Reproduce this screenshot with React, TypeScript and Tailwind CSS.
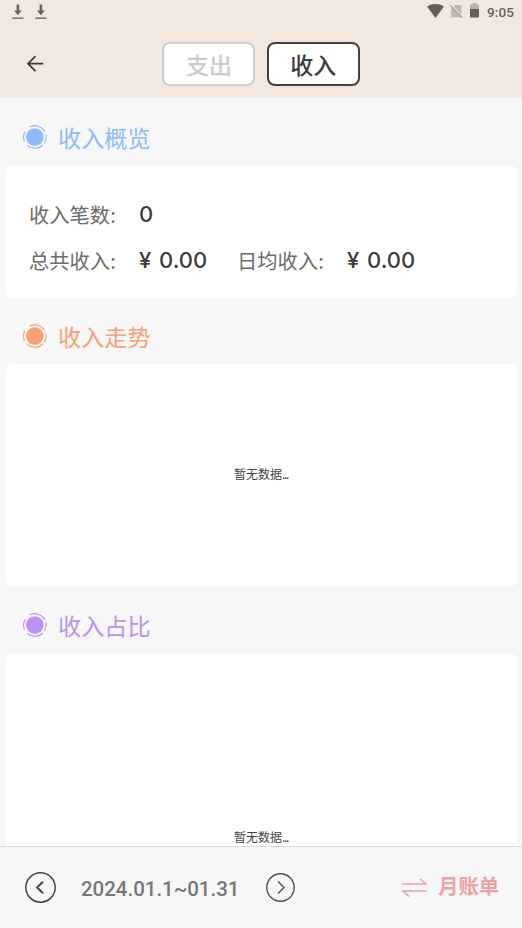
import React from "react";

const DownloadIcon = () => (
  <svg width="12" height="16" viewBox="0 0 12 16">
    <path d="M4.600.4h2.600v6.200h2.600L5.900 11.200 2 6.600h2.600z" fill="#686461" />
    <path d="M.3 14.200h11.200" stroke="#86807b" strokeWidth="1.700" />
  </svg>
);

function StatusBar() {
  return (
    <div className="flex h-6 items-start justify-between pl-[12px] pr-[8px]">
      <div className="flex gap-[11px] pt-1">
        <DownloadIcon />
        <DownloadIcon />
      </div>
      <div className="flex items-start">
        <svg className="mt-[4px]" width="17" height="14" viewBox="0 0 17 14">
          <path d="M0 2.600C2.400.8 5.300 0 8.500 0s6.100.8 8.500 2.600L8.500 14z" fill="#625e5b" />
        </svg>
        <svg className="ml-[6px] mt-[4px]" width="13" height="14" viewBox="0 0 13 14">
          <path d="M5 1h6.500v12.200H1.200V4.800z" fill="#bfb7b0" />
          <path d="M1 .6 13.400 13.200" stroke="#f2e8df" strokeWidth="1.200" />
          <path d="M0 1.200 12 13.500" stroke="#a8a09a" strokeWidth="1.200" />
        </svg>
        <svg className="ml-[7px] mt-[3px]" width="9" height="15" viewBox="0 0 9 15">
          <path d="M0 1.500h2.500V0h4v1.500H9V6H0z" fill="#bbb3ac" />
          <path d="M0 6h9v8.500H0z" fill="#625e5b" />
        </svg>
        <span className="ml-[8px] mt-[4px] text-[13.5px] font-medium leading-4 tracking-[0.1px] text-[#65615e] [font-family:Roboto,sans-serif]">
          9:05
        </span>
      </div>
    </div>
  );
}

function Header() {
  return (
    <header className="h-[98px] shrink-0 bg-[#f2e8df]">
      <StatusBar />
      <div className="flex pt-[18px]">
        <button className="ml-[26px] mt-[13px] h-[18px] w-[18px]" aria-label="返回">
          <svg width="18" height="18" viewBox="0 0 18 18" fill="none" stroke="#3b3937" strokeWidth="1.700">
            <path d="M17.200 8.700H2M9.500 1.200 2 8.700l7.500 7.500" />
          </svg>
        </button>
        <div className="ml-[118.4px] flex gap-[11.4px]">
          <button className="h-[44px] w-[93px] rounded-[8px] border-2 border-[#cccccc] bg-white text-[23px] font-medium leading-[40px] text-[#cbcbcb]">
            支出
          </button>
          <button className="h-[44px] w-[93px] rounded-[8px] border-2 border-[#414141] bg-white text-[23px] font-medium leading-[40px] text-[#3d3d3d]">
            收入
          </button>
        </div>
      </div>
    </header>
  );
}

function SectionTitle({ color, height, children }: { color: string; height: string; children: string }) {
  return (
    <h2 className={`flex shrink-0 items-center pl-[23px] ${height} ${color}`}>
      <svg width="24" height="24" viewBox="0 0 24 24" fill="none" stroke="currentColor">
        <circle cx="11.800" cy="12" r="8.800" fill="currentColor" stroke="none" />
        <path
          strokeWidth="1.100"
          d="M6.700 1.900A11.300 11.300 0 0 1 21.900 6.700M22.800 9.400A11.300 11.300 0 0 1 21.400 17.900M19.800 20A11.300 11.300 0 0 1 4.200 20.300M1.500 16.500A11.300 11.300 0 0 1 2.100 6.400"
        />
      </svg>
      <span className="ml-[11px] text-[23.2px] leading-[34px]">{children}</span>
    </h2>
  );
}

function Label({ children }: { children: string }) {
  return <span className="w-[110px] text-[20.3px] leading-[30px] text-[#6c6c6c]">{children}</span>;
}

function Value({ children }: { children: string }) {
  return (
    <span className="text-[22px] font-medium leading-[30px] text-[#3e3e3e] [font-family:Inter,sans-serif] [word-spacing:2px]">
      {children}
    </span>
  );
}

const Empty = () => (
  <span className="pr-[1px] text-[12px] leading-[18px] text-[#444444]">
    暂无数据<span className="tracking-[-1.4px]">...</span>
  </span>
);

function Footer() {
  return (
    <footer className="flex h-[82px] shrink-0 items-center border-t border-[#d9d9d9] bg-[#f7f7f7] pl-[25px] pr-[23px]">
      <svg width="31" height="31" viewBox="0 0 31 31" fill="none" stroke="#454545">
        <circle cx="15.500" cy="15.500" r="14.700" strokeWidth="1.500" />
        <path d="m18 9.700-6 5.800 6 5.800" strokeWidth="2" />
      </svg>
      <span className="ml-[25px] mt-[3px] w-[160px] whitespace-nowrap text-[20.5px] font-medium leading-6 tracking-[-0.03px] text-[#777777] [font-family:Roboto,sans-serif]">
        2024.01.1~01.31
      </span>
      <svg className="ml-[25px]" width="29" height="29" viewBox="0 0 29 29" fill="none" stroke="#505050">
        <circle cx="14.500" cy="14.500" r="13.700" strokeWidth="1.400" />
        <path d="m12 8.500 6 6-6 6" strokeWidth="1.400" />
      </svg>
      <svg className="ml-auto" width="25" height="20" viewBox="0 0 25 20" fill="none" stroke="#eda2a2" strokeWidth="1.500">
        <path d="M0 6h24L18 .8M25 13H1l6 5.500" />
      </svg>
      <span className="mb-[6px] ml-[11px] text-[20.3px] font-bold leading-[30px] text-[#eda2a2]">月账单</span>
    </footer>
  );
}

export default function App() {
  return (
    <div className="flex h-[928px] w-[522px] flex-col overflow-hidden bg-[#f7f7f7] [font-family:'Noto_Sans_CJK_SC',sans-serif]">
      <Header />
      <main className="flex min-h-0 flex-1 flex-col overflow-hidden pl-[6px] pr-[5px]">
        <div className="-ml-[6px] shrink-0 pt-[10px]">
          <SectionTitle color="text-[#8fbafc]" height="h-[57px]">收入概览</SectionTitle>
        </div>
        <section className="h-[133px] shrink-0 rounded-[8px] bg-white pl-[23px] pt-[34px]">
          <div className="flex h-[45.5px] items-start">
            <Label>收入笔数:</Label>
            <Value>0</Value>
          </div>
          <div className="flex items-start">
            <div className="flex w-[208px]">
              <Label>总共收入:</Label>
              <Value>¥ 0.00</Value>
            </div>
            <Label>日均收入:</Label>
            <Value>¥ 0.00</Value>
          </div>
        </section>
        <div className="-ml-[6px] shrink-0 pt-[10px]">
          <SectionTitle color="text-[#fba076]" height="h-[56px]">收入走势</SectionTitle>
        </div>
        <section className="flex h-[223px] shrink-0 items-center justify-center rounded-[8px] bg-white pb-[4px]">
          <Empty />
        </section>
        <div className="-ml-[6px] shrink-0 pt-[10px]">
          <SectionTitle color="text-[#bb91f3]" height="h-[56px]">收入占比</SectionTitle>
        </div>
        <section className="flex h-[369px] shrink-0 items-center justify-center rounded-[8px] bg-white pb-[2px]">
          <Empty />
        </section>
      </main>
      <Footer />
    </div>
  );
}
